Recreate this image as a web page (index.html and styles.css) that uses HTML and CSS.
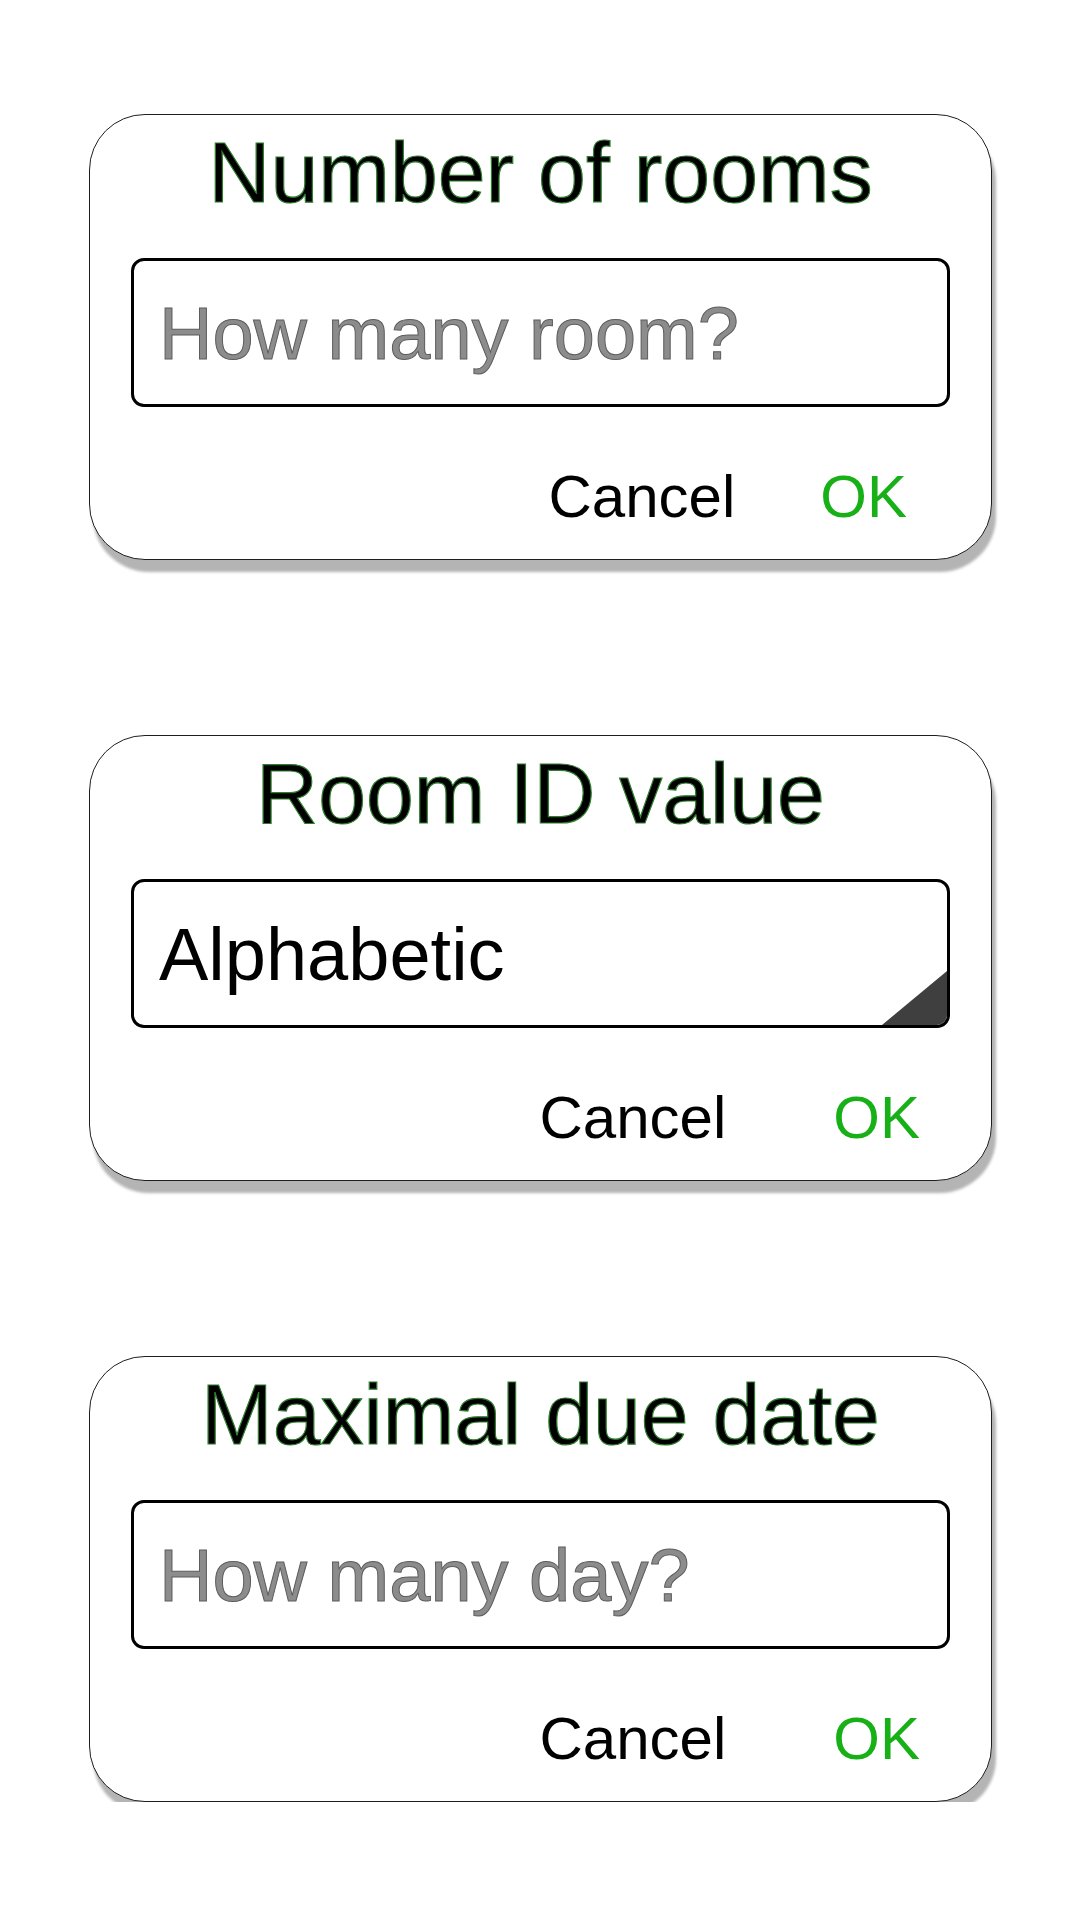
FILE: index.html
```html
<!DOCTYPE html>
<html lang="en">
<head>
<meta charset="utf-8">
<title>Dialogs</title>
<link rel="stylesheet" href="styles.css">
</head>
<body>
<main class="stack">
  <section class="dialog">
    <h1 class="dialog-title">Number of rooms</h1>
    <div class="field"><span class="placeholder">How many room?</span></div>
    <div class="actions actions-narrow">
      <span class="btn btn-cancel">Cancel</span>
      <span class="btn btn-ok">OK</span>
    </div>
  </section>

  <section class="dialog">
    <h1 class="dialog-title">Room ID value</h1>
    <div class="field field-select"><span class="value">Alphabetic</span><span class="corner"></span></div>
    <div class="actions">
      <span class="btn btn-cancel">Cancel</span>
      <span class="btn btn-ok">OK</span>
    </div>
  </section>

  <section class="dialog">
    <h1 class="dialog-title">Maximal due date</h1>
    <div class="field"><span class="placeholder">How many day?</span></div>
    <div class="actions">
      <span class="btn btn-cancel">Cancel</span>
      <span class="btn btn-ok">OK</span>
    </div>
  </section>
</main>
</body>
</html>
```
FILE: styles.css
```css
html, body {
  margin: 0;
  padding: 0;
  background: #ffffff;
}

body {
  font-family: "Liberation Sans", Arial, sans-serif;
  color: #000;
}

.stack {
  display: flex;
  flex-direction: column;
  gap: 175px;
  padding: 114px 89px 0 89px;
}

.dialog {
  background: #fff;
  border: 1px solid #1e1e1e;
  border-radius: 56px;
  box-shadow: 4px 12px 3px #b4b4b4;
  padding: 14px 41px 32px 41px;
  display: flex;
  flex-direction: column;
}

.dialog-title {
  margin: 0;
  font-size: 86px;
  font-weight: normal;
  line-height: 86px;
  text-align: center;
  color: #000;
  -webkit-text-stroke: 1.2px #2f7f2f;
}

.field {
  position: relative;
  margin-top: 43px;
  height: 143px;
  border: 3px solid #000;
  border-radius: 13px;
  overflow: hidden;
  display: flex;
  align-items: center;
  padding-left: 25px;
}

.placeholder {
  font-size: 74px;
  line-height: 1;
  color: #8c8c8c;
  -webkit-text-stroke: 1px #5c5c5c;
  margin-top: 2px;
}

.value {
  font-size: 74px;
  line-height: 1;
  color: #000;
  margin-top: 2px;
}

.corner {
  position: absolute;
  right: 0;
  bottom: 0;
  width: 65px;
  height: 54px;
  background: #3f3f3f;
  clip-path: polygon(100% 0, 100% 100%, 0 100%);
}

.actions {
  margin-top: 60px;
  display: flex;
  justify-content: flex-end;
  gap: 107px;
  padding-right: 30px;
  height: 60px;
}

.actions-narrow {
  gap: 85px;
  padding-right: 43px;
}

.btn {
  font-size: 60px;
  line-height: 60px;
}

.btn-cancel {
  color: #000;
}

.btn-ok {
  color: #17b017;
}
```
